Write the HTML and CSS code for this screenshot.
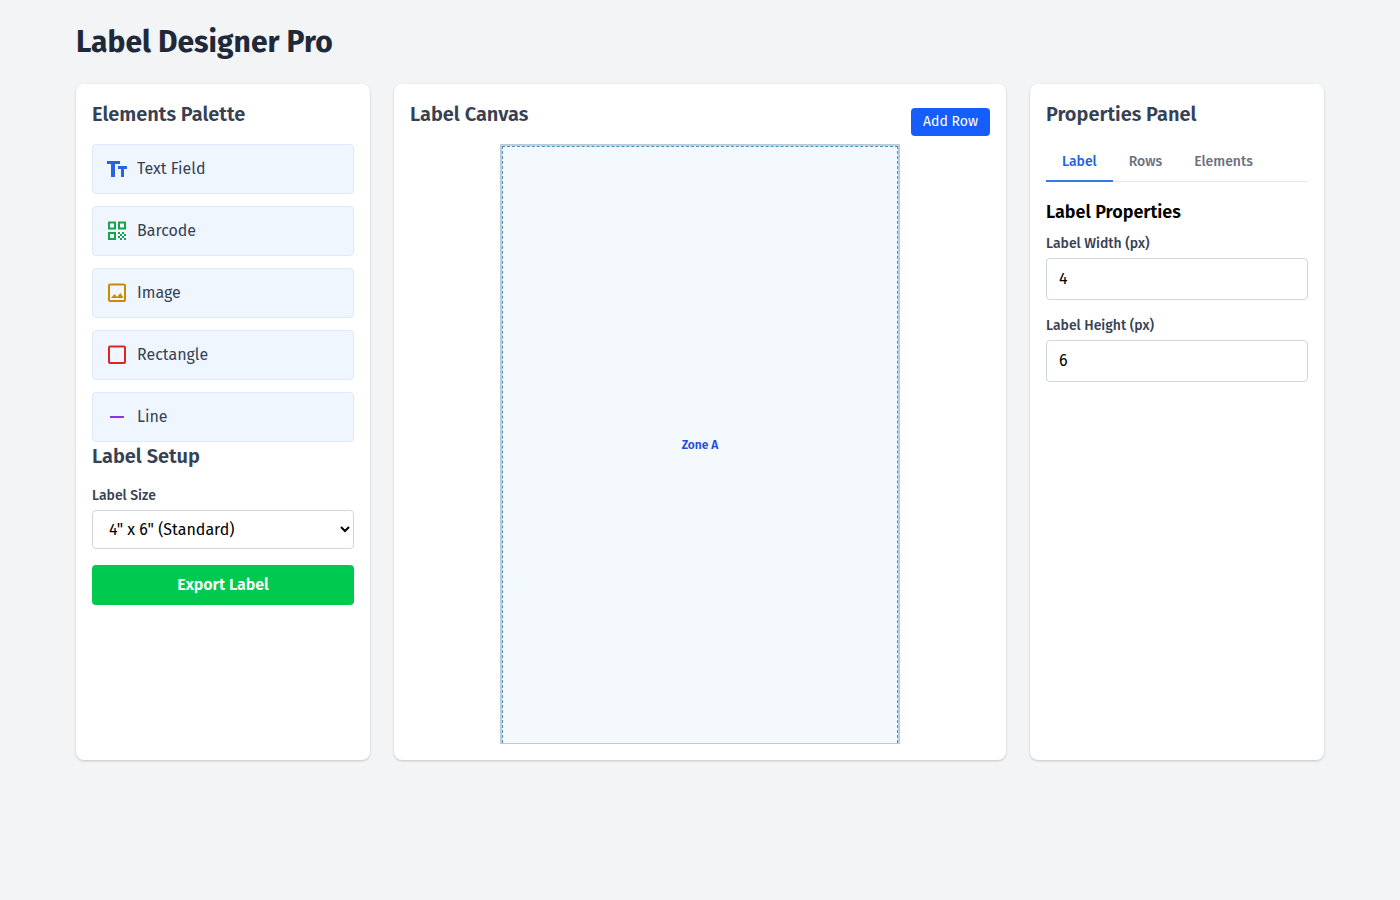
FILE: index.html
```html
<!DOCTYPE html>
<html lang="en">
<head>
    <meta charset="UTF-8">
    <meta name="viewport" content="width=device-width, initial-scale=1.0">
    <title>Label Designer Pro</title>
    <link rel="stylesheet" href="styles.css">
</head>
<body>
    <div class="container">
        <h1>Label Designer Pro</h1>

        <div class="layout">
            <aside class="panel">
                <h2>Elements Palette</h2>
                <div class="palette">
                    <div class="element" draggable="true">
                        <svg class="icon blue" viewBox="0 0 24 24"><path d="M2 4h13v3h-5v13H6V7H2zM13 9h9v3h-3v8h-3v-8h-3z"/></svg>
                        <span>Text Field</span>
                    </div>
                    <div class="element" draggable="true">
                        <svg class="icon green" viewBox="0 0 24 24"><path d="M3 10.500h8V2.500H3zm2-6h4v4H5zM13 2.500v8h8v-8zm6 6h-4v-4h4zM3 21h8v-8H3zm2-6h4v4H5zM19 19h2v2h-2zM13 13h2v2h-2zM15 15h2v2h-2zM13 17h2v2h-2zM15 19h2v2h-2zM17 17h2v2h-2zM17 13h2v2h-2zM19 15h2v2h-2z"/></svg>
                        <span>Barcode</span>
                    </div>
                    <div class="element" draggable="true">
                        <svg class="icon amber" viewBox="0 0 24 24"><path fill-rule="evenodd" d="M5 2.500h14a2 2 0 0 1 2 2V19a2 2 0 0 1-2 2H5a2 2 0 0 1-2-2V4.500a2 2 0 0 1 2-2zm0 2V19h14V4.500zM6 17l3.500-4 2.500 3 3.500-4 3 5z"/></svg>
                        <span>Image</span>
                    </div>
                    <div class="element" draggable="true">
                        <svg class="icon red" viewBox="0 0 24 24"><path fill-rule="evenodd" d="M5 2.500h14a2 2 0 0 1 2 2V19a2 2 0 0 1-2 2H5a2 2 0 0 1-2-2V4.500a2 2 0 0 1 2-2zm0 2V19h14V4.500z"/></svg>
                        <span>Rectangle</span>
                    </div>
                    <div class="element" draggable="true">
                        <svg class="icon purple" viewBox="0 0 24 24"><path d="M5 11h14v2H5z"/></svg>
                        <span>Line</span>
                    </div>
                </div>

                <h2>Label Setup</h2>
                <div class="field">
                    <label for="label-size">Label Size</label>
                    <select id="label-size">
                        <option>4" x 6" (Standard)</option>
                        <option>4" x 4"</option>
                        <option>2" x 4"</option>
                    </select>
                </div>
                <button class="export" type="button">Export Label</button>
            </aside>

            <main class="panel">
                <div class="canvas-header">
                    <h2>Label Canvas</h2>
                    <button class="add-row" type="button">Add Row</button>
                </div>
                <div class="canvas">
                    <div class="row">
                        <div class="zone">Zone A</div>
                    </div>
                </div>
            </main>

            <aside class="panel">
                <h2>Properties Panel</h2>
                <div class="tabs">
                    <button class="tab active" type="button">Label</button>
                    <button class="tab" type="button">Rows</button>
                    <button class="tab" type="button">Elements</button>
                </div>
                <h3>Label Properties</h3>
                <div class="field">
                    <label for="label-width">Label Width (px)</label>
                    <input id="label-width" type="number" value="4">
                </div>
                <div class="field">
                    <label for="label-height">Label Height (px)</label>
                    <input id="label-height" type="number" value="6">
                </div>
            </aside>
        </div>
    </div>
</body>
</html>
```
FILE: styles.css
```css
* {
    box-sizing: border-box;
}
body {
    margin: 0;
    font-family: "Fira Sans", Roboto, sans-serif;
    font-size: 16px;
    line-height: 24px;
    color: #000;
    background-color: #f3f4f6;
}
button, input, select {
    font: inherit;
}
.container {
    max-width: 1280px;
    margin: 0 auto;
    padding: 24px 16px;
}
h1 {
    margin: 0 0 24px;
    font-size: 30px;
    line-height: 36px;
    font-weight: 700;
    color: #1e2939;
}
h2 {
    margin: 0 0 16px;
    font-size: 20px;
    line-height: 28px;
    font-weight: 600;
    color: #364153;
}
h3 {
    margin: 0 0 8px;
    font-size: 18px;
    line-height: 28px;
    font-weight: 600;
}
.layout {
    display: grid;
    grid-template-columns: repeat(12, 1fr);
    gap: 24px;
}
.panel {
    grid-column: span 3;
    padding: 16px;
    background: white;
    border-radius: 8px;
    box-shadow: 0 1px 3px rgba(0, 0, 0, 0.1), 0 1px 2px rgba(0, 0, 0, 0.1);
}
main.panel {
    grid-column: span 6;
}

/* Palette */
.palette {
    display: flex;
    flex-direction: column;
    gap: 12px;
}
.element {
    display: flex;
    align-items: center;
    gap: 8px;
    padding: 12px;
    color: #364153;
    background-color: #eff6ff;
    border: 1px solid #dbeafe;
    border-radius: 4px;
    cursor: move;
}
.icon {
    width: 24px;
    height: 24px;
    fill: currentColor;
}
.blue { color: #2563eb; }
.green { color: #16a34a; }
.amber { color: #ca8a04; }
.red { color: #dc2626; }
.purple { color: #8535e6; }

/* Form controls */
.field {
    margin-bottom: 16px;
}
.field label {
    display: block;
    margin-bottom: 4px;
    font-size: 14px;
    line-height: 20px;
    font-weight: 500;
    color: #364153;
}
.field input,
.field select {
    display: block;
    width: 100%;
    padding: 8px 12px;
    color: #000;
    background-color: white;
    border: 1px solid #d1d5dc;
    border-radius: 4px;
}
.field input {
    height: 42px;
    padding: 7px 12px 9px;
    appearance: textfield;
}
.field select {
    height: 39px;
    padding-right: 0;
}
.export {
    width: 100%;
    padding: 8px 16px;
    color: white;
    font-weight: 600;
    background-color: #00c950;
    border: none;
    border-radius: 4px;
    cursor: pointer;
}

/* Canvas */
.canvas-header {
    display: flex;
    justify-content: space-between;
    align-items: center;
}
.add-row {
    padding: 4px 12px;
    font-size: 14px;
    line-height: 20px;
    color: white;
    background-color: #155dfc;
    border: none;
    border-radius: 4px;
    cursor: pointer;
}
.canvas {
    max-width: 400px;
    height: 600px;
    margin: 0 auto;
    border: 1px solid #bfc9d4;
}
.row {
    height: 100%;
    border: 1px solid #b9d0e6;
    border-bottom: none;
}
.zone {
    display: flex;
    align-items: center;
    justify-content: center;
    height: 100%;
    font-size: 12px;
    line-height: 16px;
    font-weight: 600;
    color: #1d4ed8;
    background-color: #f3f9fd;
    border: 1px dashed #4a90c4;
    border-bottom: none;
}

/* Tabs */
.tabs {
    display: flex;
    height: 38px;
    margin-bottom: 16px;
    border-bottom: 1px solid #e5e7eb;
}
.tab {
    height: 38px;
    padding: 8px 16px;
    font-size: 14px;
    line-height: 20px;
    font-weight: 500;
    color: #6a7282;
    background: none;
    border: none;
    border-bottom: 2px solid transparent;
    cursor: pointer;
}
.tab.active {
    color: #1f62e0;
    border-bottom-color: #2f7bea;
}
```
